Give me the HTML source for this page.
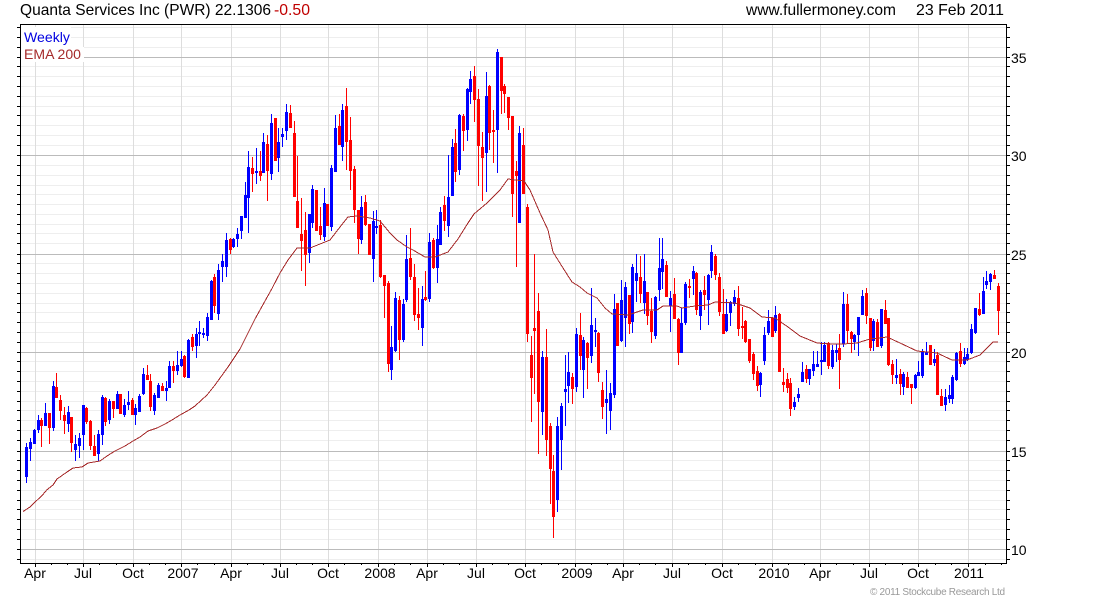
<!DOCTYPE html>
<html><head><meta charset="utf-8"><title>Quanta Services Inc (PWR)</title>
<style>html,body{margin:0;padding:0;background:#fff}svg{display:block}text{font-family:"Liberation Sans",Arial,sans-serif}</style>
</head><body>
<svg xmlns="http://www.w3.org/2000/svg" width="1100" height="600" viewBox="0 0 1100 600">
<g shape-rendering="crispEdges" fill="none">
<path stroke="#eee" d="M21 27.5H1006M21 37.5H1006M21 47.5H1006M21 66.5H1006M21 76.5H1006M21 86.5H1006M21 96.5H1006M21 106.5H1006M21 115.5H1006M21 125.5H1006M21 135.5H1006M21 145.5H1006M21 165.5H1006M21 175.5H1006M21 185.5H1006M21 194.5H1006M21 204.5H1006M21 214.5H1006M21 224.5H1006M21 233.5H1006M21 243.5H1006M21 263.5H1006M21 273.5H1006M21 283.5H1006M21 293.5H1006M21 303.5H1006M21 312.5H1006M21 322.5H1006M21 332.5H1006M21 342.5H1006M21 361.5H1006M21 371.5H1006M21 381.5H1006M21 391.5H1006M21 401.5H1006M21 410.5H1006M21 420.5H1006M21 430.5H1006M21 440.5H1006M21 460.5H1006M21 470.5H1006M21 480.5H1006M21 490.5H1006M21 500.5H1006M21 509.5H1006M21 519.5H1006M21 529.5H1006M21 539.5H1006M21 559.5H1006"/>
<path stroke="#ddd" d="M35.5 25V563M83.5 25V563M133.5 25V563M181.5 25V563M231.5 25V563M280.5 25V563M328.5 25V563M378.5 25V563M427.5 25V563M476.5 25V563M525.5 25V563M575.5 25V563M623.5 25V563M672.5 25V563M722.5 25V563M772.5 25V563M820.5 25V563M869.5 25V563M918.5 25V563M968.5 25V563"/>
<path stroke="#bbb" d="M21 57.5H1006M21 155.5H1006M21 254.5H1006M21 352.5H1006M21 451.5H1006M21 549.5H1006"/>
<rect x="21" y="27" width="50" height="20" fill="#fff"/>
<rect x="21" y="47" width="63" height="15" fill="#fff"/>
<path stroke="#00f" d="M26.5 443V483M30.5 438V461M34.5 429V444M38.5 415V433M45.5 403V426M53.5 381V431M68.5 406V432M75.5 435V461M79.5 433V458M83.5 405V450M98.5 430V461M102.5 395V445M109.5 399V424M117.5 391V409M124.5 399V417M128.5 391V410M135.5 404V425M139.5 394V412M143.5 368V395M154.5 393V415M158.5 383V398M166.5 381V401M169.5 361V388M177.5 351V375M181.5 351V367M188.5 339V378M196.5 328V358M199.5 321V346M203.5 328V338M207.5 313V341M211.5 280V320M218.5 264V320M222.5 254V282M226.5 233V277M233.5 238V248M237.5 228V247M241.5 216V239M245.5 182V218M248.5 151V233M256.5 148V184M263.5 133V173M271.5 114V180M278.5 128V172M282.5 128V147M286.5 104V140M309.5 214V263M312.5 185V228M324.5 188V241M331.5 165V231M335.5 115V172M342.5 104V161M361.5 196V244M373.5 211V282M376.5 210V234M391.5 326V380M395.5 292V352M403.5 299V342M406.5 235V302M422.5 286V346M429.5 233V302M437.5 225V283M440.5 207V245M448.5 155V237M452.5 139V196M459.5 114V175M467.5 88V141M470.5 71V104M486.5 72V192M497.5 49V173M519.5 126V223M542.5 351V435M557.5 417V512M561.5 403V470M565.5 355V426M568.5 352V403M576.5 328V392M583.5 337V398M591.5 288V363M595.5 318V347M606.5 370V434M610.5 383V430M614.5 294V398M621.5 280V342M625.5 282V347M632.5 264V333M636.5 254V302M644.5 254V314M655.5 296V339M659.5 238V301M662.5 238V289M670.5 291V332M681.5 308V352M685.5 282V325M693.5 266V295M700.5 290V330M708.5 274V325M711.5 245V278M726.5 299V332M730.5 301V326M734.5 290V306M760.5 372V397M764.5 327V365M768.5 310V335M775.5 306V333M794.5 397V410M798.5 388V402M802.5 362V382M809.5 369V385M813.5 351V376M817.5 351V367M821.5 342V375M824.5 342V362M832.5 345V369M836.5 344V362M843.5 292V347M854.5 334V350M858.5 317V356M862.5 290V315M873.5 319V351M881.5 309V348M896.5 359V384M903.5 372V395M915.5 374V389M918.5 361V376M922.5 349V378M926.5 342V355M934.5 349V366M945.5 389V411M949.5 385V403M952.5 375V404M956.5 352V381M964.5 348V365M967.5 348V361M971.5 324V354M975.5 308V334M983.5 277V314M986.5 271V289M990.5 273V290"/>
<path stroke="#00f" stroke-width="3" d="M26.5 447V477M30.5 442V449M34.5 430V444M38.5 420V430M45.5 413V426M53.5 386V428M68.5 412V424M75.5 444V450M79.5 438V446M83.5 405V435M98.5 434V454M102.5 397V435M109.5 401V420M117.5 394V409M124.5 405V415M128.5 402V405M135.5 408V415M139.5 396V412M143.5 374V394M154.5 395V411M158.5 385V398M166.5 388V391M169.5 366V388M177.5 365V371M181.5 359V366M188.5 340V378M196.5 334V346M199.5 332V334M203.5 333V335M207.5 317V336M211.5 281V320M218.5 270V314M222.5 261V267M226.5 240V267M233.5 239V247M237.5 234V239M241.5 216V231M245.5 195V218M248.5 167V198M256.5 171V173M263.5 142V173M271.5 123V174M278.5 142V158M282.5 134V137M286.5 112V131M309.5 214V253M312.5 189V223M324.5 203V237M331.5 168V227M335.5 128V172M342.5 110V147M361.5 207V240M373.5 221V259M376.5 226V228M391.5 347V370M395.5 298V351M403.5 304V340M406.5 259V300M422.5 299V328M429.5 242V299M437.5 239V268M440.5 212V245M448.5 197V226M452.5 147V196M459.5 115V170M467.5 89V130M470.5 79V92M486.5 96V153M497.5 52V130M519.5 133V223M542.5 357V412M557.5 426V500M561.5 406V440M565.5 389V392M568.5 372V386M576.5 334V387M583.5 340V370M591.5 325V356M595.5 330V332M606.5 399V403M610.5 393V411M614.5 309V395M621.5 300V341M625.5 287V318M632.5 267V322M636.5 273V281M644.5 281V303M655.5 297V336M659.5 268V290M662.5 259V272M670.5 298V306M681.5 323V353M685.5 284V323M693.5 271V279M700.5 292V316M708.5 275V300M711.5 252V271M726.5 314V331M730.5 302V313M734.5 297V304M760.5 373V385M764.5 335V361M768.5 321V333M775.5 315V331M794.5 402V407M798.5 394V398M802.5 372V382M809.5 369V379M813.5 364V371M817.5 364V367M821.5 360V362M824.5 345V362M832.5 350V367M836.5 350V353M843.5 304V344M854.5 335V342M858.5 317V335M862.5 296V315M873.5 321V341M881.5 309V346M896.5 375V378M903.5 374V387M915.5 375V388M918.5 372V376M922.5 352V376M926.5 352V355M934.5 359V363M945.5 397V405M949.5 395V399M952.5 377V399M956.5 353V380M964.5 357V364M967.5 354V360M971.5 329V353M975.5 308V333M983.5 291V314M986.5 281V285M990.5 274V282"/>
<path stroke="#f00" d="M41.5 418V447M49.5 413V444M56.5 373V398M60.5 395V420M64.5 407V434M71.5 417V452M86.5 407V424M90.5 420V450M94.5 435V456M105.5 397V426M113.5 401V418M120.5 394V414M132.5 398V415M147.5 365V380M150.5 374V411M162.5 383V391M173.5 361V383M184.5 355V378M192.5 334V351M214.5 274V313M230.5 238V254M252.5 157V192M260.5 151V181M267.5 135V201M275.5 118V161M290.5 105V128M294.5 121V197M297.5 156V228M301.5 198V271M305.5 212V286M316.5 190V231M320.5 207V240M327.5 204V226M339.5 114V145M346.5 88V170M350.5 117V190M354.5 166V223M358.5 210V254M365.5 195V226M369.5 224V255M380.5 220V278M384.5 275V318M388.5 281V372M399.5 296V360M410.5 228V280M414.5 264V321M418.5 288V330M425.5 271V301M433.5 238V269M444.5 196V231M455.5 129V182M463.5 114V151M474.5 66V122M478.5 89V186M482.5 132V201M489.5 85V150M493.5 110V163M501.5 57V114M504.5 84V113M508.5 97V130M512.5 116V217M516.5 161V267M523.5 128V194M527.5 204V342M531.5 336V422M534.5 254V394M538.5 293V454M546.5 329V456M550.5 423V504M553.5 455V538M572.5 373V404M580.5 313V370M587.5 342V389M598.5 332V382M602.5 382V419M617.5 303V346M629.5 295V334M640.5 256V303M647.5 292V325M651.5 298V343M666.5 261V297M674.5 278V319M678.5 318V365M689.5 279V298M696.5 272V315M704.5 276V310M715.5 254V280M719.5 273V316M723.5 289V334M738.5 286V336M742.5 307V339M745.5 320V343M749.5 339V363M753.5 352V380M757.5 366V391M772.5 317V337M779.5 313V372M783.5 368V392M787.5 373V393M790.5 378V416M806.5 365V383M828.5 342V369M839.5 334V389M847.5 294V344M851.5 331V353M866.5 288V324M870.5 318V351M877.5 319V347M885.5 300V324M888.5 318V366M892.5 360V384M900.5 369V395M907.5 372V388M911.5 384V404M930.5 345V365M937.5 352V395M941.5 389V406M960.5 343V367M979.5 293V316M994.5 270V279M998.5 283V335"/>
<path stroke="#f00" stroke-width="3" d="M41.5 420V426M49.5 413V428M56.5 387V398M60.5 400V411M64.5 415V421M71.5 417V443M86.5 408V422M90.5 421V446M94.5 446V456M105.5 398V422M113.5 401V409M120.5 394V414M132.5 400V415M147.5 375V380M150.5 381V407M162.5 386V391M173.5 366V371M184.5 356V377M192.5 337V347M214.5 277V306M230.5 239V250M252.5 168V174M260.5 171V176M267.5 144V171M275.5 118V161M290.5 113V128M294.5 133V197M297.5 201V228M301.5 234V241M305.5 230V255M316.5 190V231M320.5 226V235M327.5 204V226M339.5 126V145M346.5 106V142M350.5 140V171M354.5 169V210M358.5 210V239M365.5 202V225M369.5 224V255M380.5 225V277M384.5 275V286M388.5 283V364M399.5 300V340M410.5 258V277M414.5 277V315M418.5 314V318M425.5 297V300M433.5 240V268M444.5 205V221M455.5 143V172M463.5 116V131M474.5 76V100M478.5 99V146M482.5 147V158M489.5 86V133M493.5 130V132M501.5 57V91M504.5 86V94M508.5 97V118M512.5 116V194M516.5 171V176M523.5 145V194M527.5 207V334M531.5 355V378M534.5 328V331M538.5 311V402M546.5 357V440M550.5 426V469M553.5 471V517M572.5 377V389M580.5 335V356M587.5 343V358M598.5 333V373M602.5 390V407M617.5 303V346M629.5 295V324M640.5 277V294M647.5 292V316M651.5 311V332M666.5 265V297M674.5 294V319M678.5 319V353M689.5 286V288M696.5 273V310M704.5 290V295M715.5 256V275M719.5 277V312M723.5 314V334M738.5 298V329M742.5 326V328M745.5 321V342M749.5 339V361M753.5 354V374M757.5 371V386M772.5 318V337M779.5 314V372M783.5 382V385M787.5 379V388M790.5 383V409M806.5 369V379M828.5 343V366M839.5 348V360M847.5 304V331M851.5 332V339M866.5 293V316M870.5 318V348M877.5 322V347M885.5 310V324M888.5 318V365M892.5 364V375M900.5 374V384M907.5 377V388M911.5 384V388M930.5 345V365M937.5 355V395M941.5 396V406M960.5 351V364M979.5 309V315M994.5 275V279M998.5 286V311"/>
<path stroke="#000" d="M20.5 24V564M1006.5 24V564M20 24.5H1007M20 563.5H1007M17 27.5h3M17 37.5h3M17 47.5h3M17 57.5h3M17 66.5h3M17 76.5h3M17 86.5h3M17 96.5h3M17 106.5h3M17 115.5h3M17 125.5h3M17 135.5h3M17 145.5h3M17 155.5h3M17 165.5h3M17 175.5h3M17 185.5h3M17 194.5h3M17 204.5h3M17 214.5h3M17 224.5h3M17 233.5h3M17 243.5h3M17 254.5h3M17 263.5h3M17 273.5h3M17 283.5h3M17 293.5h3M17 303.5h3M17 312.5h3M17 322.5h3M17 332.5h3M17 342.5h3M17 352.5h3M17 361.5h3M17 371.5h3M17 381.5h3M17 391.5h3M17 401.5h3M17 410.5h3M17 420.5h3M17 430.5h3M17 440.5h3M17 451.5h3M17 460.5h3M17 470.5h3M17 480.5h3M17 490.5h3M17 500.5h3M17 509.5h3M17 519.5h3M17 529.5h3M17 539.5h3M17 549.5h3M17 559.5h3M1007 27.5h3M1007 37.5h3M1007 47.5h3M1007 57.5h3M1007 66.5h3M1007 76.5h3M1007 86.5h3M1007 96.5h3M1007 106.5h3M1007 115.5h3M1007 125.5h3M1007 135.5h3M1007 145.5h3M1007 155.5h3M1007 165.5h3M1007 175.5h3M1007 185.5h3M1007 194.5h3M1007 204.5h3M1007 214.5h3M1007 224.5h3M1007 233.5h3M1007 243.5h3M1007 254.5h3M1007 263.5h3M1007 273.5h3M1007 283.5h3M1007 293.5h3M1007 303.5h3M1007 312.5h3M1007 322.5h3M1007 332.5h3M1007 342.5h3M1007 352.5h3M1007 361.5h3M1007 371.5h3M1007 381.5h3M1007 391.5h3M1007 401.5h3M1007 410.5h3M1007 420.5h3M1007 430.5h3M1007 440.5h3M1007 451.5h3M1007 460.5h3M1007 470.5h3M1007 480.5h3M1007 490.5h3M1007 500.5h3M1007 509.5h3M1007 519.5h3M1007 529.5h3M1007 539.5h3M1007 549.5h3M1007 559.5h3M35.5 564v3M83.5 564v3M133.5 564v3M181.5 564v3M231.5 564v3M280.5 564v3M328.5 564v3M378.5 564v3M427.5 564v3M476.5 564v3M525.5 564v3M575.5 564v3M623.5 564v3M672.5 564v3M722.5 564v3M772.5 564v3M820.5 564v3M869.5 564v3M918.5 564v3M968.5 564v3M51.5 564v1M67.5 564v1M99.5 564v1M116.5 564v1M149.5 564v1M165.5 564v1M197.5 564v1M214.5 564v1M247.5 564v1M263.5 564v1M296.5 564v1M312.5 564v1M344.5 564v1M361.5 564v1M394.5 564v1M410.5 564v1M443.5 564v1M459.5 564v1M492.5 564v1M508.5 564v1M541.5 564v1M558.5 564v1M591.5 564v1M607.5 564v1M639.5 564v1M655.5 564v1M688.5 564v1M705.5 564v1M738.5 564v1M755.5 564v1M788.5 564v1M804.5 564v1M836.5 564v1M853.5 564v1M885.5 564v1M902.5 564v1M935.5 564v1M951.5 564v1M985.5 564v1M1001.5 564v1"/>
</g>
<path fill="none" stroke="#a52a2a" stroke-width="1" shape-rendering="crispEdges" d="M23 511.5L30 507L35 502L41.7 496L46.7 490L53 485L57 479L67 472L73 468L82 467L88 463L100 461L107 456L115 451L125 446L133 441L140 437L148 431L157 428L165 424L172 420L180 415L189 410L195 406L207 395L215 385L228 367L240 349L255 319L271.7 289L280 273L288 260L297 248L310 248L330 240L340 227L348 217L357 216L370 218L380 221L390 233L397 240L407 247L413 250L425 257L435 257L448 252L458 239L468 223L474 214L487 203L500 190L508 179L524 181L530 190L540 213L548 230L553 252L563 268L572 282L580 287L587 293L597 298L605 308L612 314L628 315L643 310L657 310L663 306L677 306L682 308L695 306L708 305L715 302L735 303L750 308L762 317L775 318L788 327L800 336L817 343L830 344L843 344L857 343L870 339L887 337L900 343L917 351L937 353L952 360L967 360L980 355L993 342L998 342"/>
<g font-size="16" fill="#000">
<text x="20" y="15" textLength="251" lengthAdjust="spacingAndGlyphs">Quanta Services Inc (PWR) 22.1306</text>
<text x="274" y="15" textLength="36" lengthAdjust="spacingAndGlyphs" fill="#c00000">-0.50</text>
<text x="746" y="15" textLength="150" lengthAdjust="spacingAndGlyphs">www.fullermoney.com</text>
<text x="916" y="15" textLength="88" lengthAdjust="spacingAndGlyphs">23 Feb 2011</text>
</g>
<text x="24" y="42" font-size="14" fill="#0000e0" textLength="46" lengthAdjust="spacingAndGlyphs">Weekly</text>
<text x="24" y="59" font-size="14" fill="#a52a2a" textLength="57" lengthAdjust="spacingAndGlyphs">EMA 200</text>
<g font-size="14" fill="#000">
<text x="1011" y="63">35</text>
<text x="1011" y="161">30</text>
<text x="1011" y="260">25</text>
<text x="1011" y="358">20</text>
<text x="1011" y="457">15</text>
<text x="1011" y="555">10</text>
</g>
<g font-size="14" fill="#000" text-anchor="middle">
<text x="35" y="578">Apr</text><text x="83" y="578">Jul</text><text x="133" y="578">Oct</text><text x="183" y="578">2007</text>
<text x="231" y="578">Apr</text><text x="280" y="578">Jul</text><text x="328" y="578">Oct</text><text x="380" y="578">2008</text>
<text x="427" y="578">Apr</text><text x="476" y="578">Jul</text><text x="525" y="578">Oct</text><text x="577" y="578">2009</text>
<text x="623" y="578">Apr</text><text x="672" y="578">Jul</text><text x="722" y="578">Oct</text><text x="774" y="578">2010</text>
<text x="820" y="578">Apr</text><text x="869" y="578">Jul</text><text x="918" y="578">Oct</text><text x="969" y="578">2011</text>
</g>
<text x="870" y="595" font-size="10" fill="#999" textLength="135" lengthAdjust="spacing">© 2011 Stockcube Research Ltd</text>
</svg>
</body></html>
